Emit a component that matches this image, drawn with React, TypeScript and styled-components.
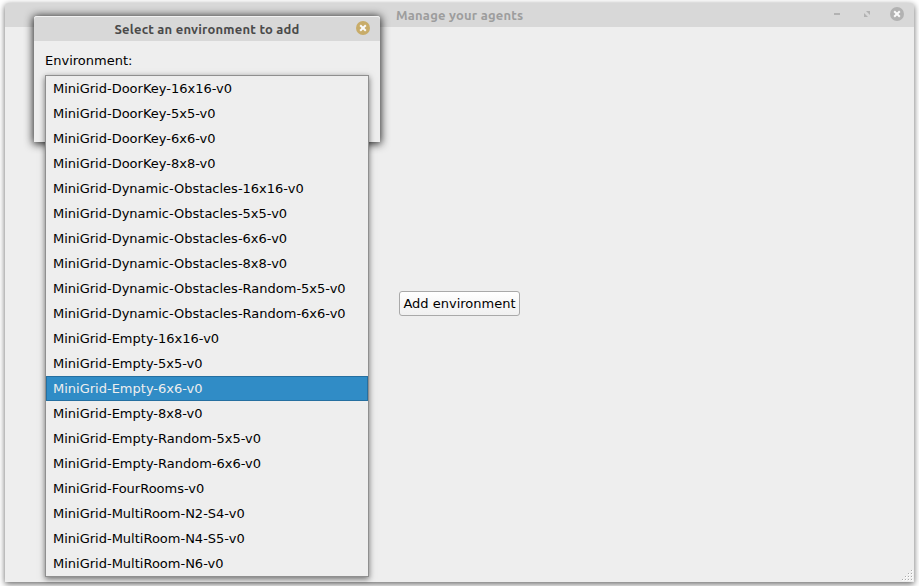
import React from "react";
import styled, { createGlobalStyle } from "styled-components";

const GlobalStyle = createGlobalStyle`
  * { box-sizing: border-box; }
  body {
    margin: 0;
    overflow: hidden;
    background: #fff;
    color: #000;
    font: 13px/25px "DejaVu Sans", sans-serif;
  }
`;

const Desktop = styled.main`
  position: relative;
  width: 919px;
  height: 586px;
  padding: 3px 5px 4px;
  overflow: hidden;
`;

const MainWindow = styled.section`
  display: flex;
  flex-direction: column;
  height: 579px;
  position: relative;
  background: #eeeeee;
  border-radius: 3px 3px 0 0;
  box-shadow: 0 2px 6px rgba(0, 0, 0, 0.6);
`;

const TitleBar = styled.header<{ $active?: boolean }>`
  display: grid;
  grid-template-columns: 1fr auto 1fr;
  align-items: center;
  flex: none;
  height: ${(p) => (p.$active ? 25 : 24)}px;
  padding: 0 10px;
  background: #d8d8d8;
  border-radius: 3px 3px 0 0;
  color: ${(p) => (p.$active ? "#4a4a4a" : "#9d9d9d")};
  box-shadow: ${(p) => (p.$active ? "inset 0 1px #f2f2f2" : "none")};
`;

const Title = styled.h1<{ $width: number }>`
  grid-column: 2;
  margin: 0;
  width: ${(p) => p.$width}px;
  white-space: nowrap;
  font: 600 13px/24px Ubuntu, "Open Sans", sans-serif;
  letter-spacing: 0.21px;
`;

const Controls = styled.div`
  display: flex;
  justify-content: flex-end;
  gap: 16px;
`;

const Glyph = styled.svg`
  display: block;
  width: 14px;
  height: 14px;
  margin-top: -2px;
`;

const Content = styled.div`
  flex: 1;
  display: flex;
  align-items: center;
  justify-content: center;
  padding-bottom: 2px;
`;

const AddButton = styled.button`
  width: 121px;
  height: 25px;
  padding: 0;
  border: 1px solid #a9a9a9;
  border-radius: 3px;
  background: linear-gradient(#ffffff, #f0f0f0);
  color: #000;
  font: 13px/23px "DejaVu Sans", sans-serif;
  white-space: nowrap;
`;

const SizeGrip = styled.svg`
  position: absolute;
  right: 1px;
  bottom: 1px;
  width: 11px;
  height: 11px;
`;

const Dialog = styled.section`
  position: absolute;
  left: 34px;
  top: 16px;
  width: 346px;
  height: 126px;
  background: #eeeeee;
  border-radius: 3px 3px 0 0;
  box-shadow: 0 1px 9px 1px rgba(0, 0, 0, 0.85);
`;

const FieldLabel = styled.label`
  display: block;
  padding: 7px 11px 0;
`;

const Options = styled.ul`
  position: absolute;
  left: 11px;
  top: 59px;
  width: 324px;
  margin: 0;
  padding: 0;
  list-style: none;
  background: #eeeeee;
  border: 1px solid #8f8f8f;
  box-shadow: 0 2px 6px rgba(0, 0, 0, 0.55);
`;

const Option = styled.li<{ $selected: boolean }>`
  height: 25px;
  padding: 0 6px;
  border: 1px solid ${(p) => (p.$selected ? "#256fa0" : "transparent")};
  background: ${(p) => (p.$selected ? "#308cc6" : "#eeeeee")};
  color: ${(p) => (p.$selected ? "#eeeeee" : "#000")};
  line-height: 23px;
  white-space: nowrap;
`;

const environments = [
  "DoorKey-16x16",
  "DoorKey-5x5",
  "DoorKey-6x6",
  "DoorKey-8x8",
  "Dynamic-Obstacles-16x16",
  "Dynamic-Obstacles-5x5",
  "Dynamic-Obstacles-6x6",
  "Dynamic-Obstacles-8x8",
  "Dynamic-Obstacles-Random-5x5",
  "Dynamic-Obstacles-Random-6x6",
  "Empty-16x16",
  "Empty-5x5",
  "Empty-6x6",
  "Empty-8x8",
  "Empty-Random-5x5",
  "Empty-Random-6x6",
  "FourRooms",
  "MultiRoom-N2-S4",
  "MultiRoom-N4-S5",
  "MultiRoom-N6",
];

const CloseGlyph = ({ color }: { color: string }) => (
  <Glyph viewBox="0 0 14 14">
    <circle cx="7" cy="7" r="7" fill={color} />
    <path d="M4.2 4.2l5.6 5.6M9.8 4.2l-5.6 5.6" stroke="#fafafa" strokeWidth="2" />
  </Glyph>
);

const gripDots = [
  [9, 0],
  [6, 3], [9, 3],
  [3, 6], [6, 6], [9, 6],
  [0, 9], [3, 9], [6, 9], [9, 9],
];

export default function App() {
  return (
    <Desktop>
      <GlobalStyle />
      <MainWindow>
        <TitleBar>
          <Title $width={127}>Manage your agents</Title>
          <Controls>
            <Glyph viewBox="0 0 14 14">
              <path d="M4 6h6v2H4z" fill="#b2b2b2" />
            </Glyph>
            <Glyph viewBox="0 0 14 14">
              <path d="M6 4h4v4zM4 6v4h4z" fill="#b2b2b2" />
            </Glyph>
            <CloseGlyph color="#b2b2b2" />
          </Controls>
        </TitleBar>
        <Content>
          <AddButton>Add environment</AddButton>
        </Content>
        <SizeGrip viewBox="0 0 11 11" shapeRendering="crispEdges">
          {gripDots.map(([x, y]) => (
            <g key={`${x}-${y}`}>
              <rect x={x} y={y} width="2" height="2" fill="#fafafa" />
              <rect x={x} y={y} width="1" height="1" fill="#aaaaaa" />
            </g>
          ))}
        </SizeGrip>
      </MainWindow>
      <Dialog>
        <TitleBar $active>
          <Title $width={185}>Select an environment to add</Title>
          <Controls>
            <CloseGlyph color="#c8ac69" />
          </Controls>
        </TitleBar>
        <FieldLabel>Environment:</FieldLabel>
        <Options role="listbox">
          {environments.map((name) => (
            <Option key={name} role="option" $selected={name === "Empty-6x6"}>
              {`MiniGrid-${name}-v0`}
            </Option>
          ))}
        </Options>
      </Dialog>
    </Desktop>
  );
}
